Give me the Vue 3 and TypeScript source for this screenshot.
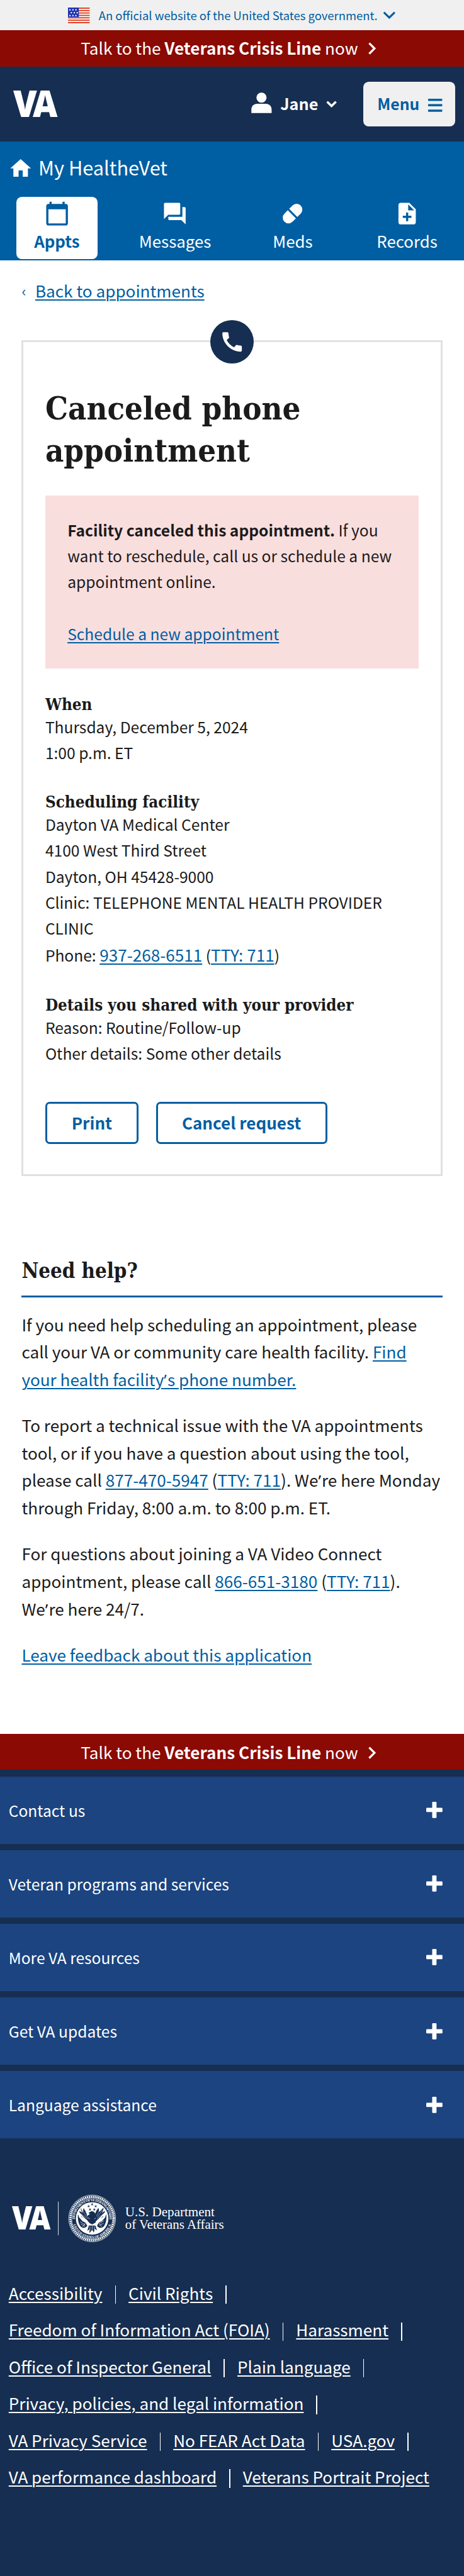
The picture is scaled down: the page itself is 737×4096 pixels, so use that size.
<script setup lang="ts">
interface NavItem {
  label: string
  icon: 'calendar' | 'forum' | 'pill' | 'note'
  active?: boolean
}

const navItems: NavItem[] = [
  { label: 'Appts', icon: 'calendar', active: true },
  { label: 'Messages', icon: 'forum' },
  { label: 'Meds', icon: 'pill' },
  { label: 'Records', icon: 'note' },
]

const iconPaths: Record<string, string> = {
  calendar:
    'M20 3h-1V1h-2v2H7V1H5v2H4c-1.1 0-2 .9-2 2v16c0 1.1.9 2 2 2h16c1.1 0 2-.9 2-2V5c0-1.1-.9-2-2-2zm0 18H4V8h16v13z',
  forum:
    'M21 6h-2v9H6v2c0 .55.45 1 1 1h11l4 4V7c0-.55-.45-1-1-1zm-4 6V3c0-.55-.45-1-1-1H3c-.55 0-1 .45-1 1v14l4-4h10c.55 0 1-.45 1-1z',
  note: 'M14 2H6c-1.1 0-1.99.9-1.99 2L4 20c0 1.1.89 2 1.99 2H18c1.1 0 2-.9 2-2V8l-6-6zm2 14h-3v3h-2v-3H8v-2h3v-3h2v3h3v2zm-3-7V3.5L18.5 9H13z',
}

const facilityLines: string[] = [
  'Dayton VA Medical Center',
  '4100 West Third Street',
  'Dayton, OH 45428-9000',
  'Clinic: TELEPHONE MENTAL HEALTH PROVIDER',
  'CLINIC',
]

const accordions: string[] = [
  'Contact us',
  'Veteran programs and services',
  'More VA resources',
  'Get VA updates',
  'Language assistance',
]

const footerRows: string[][] = [
  ['Accessibility', 'Civil Rights'],
  ['Freedom of Information Act (FOIA)', 'Harassment'],
  ['Office of Inspector General', 'Plain language'],
  ['Privacy, policies, and legal information'],
  ['VA Privacy Service', 'No FEAR Act Data', 'USA.gov'],
  ['VA performance dashboard', 'Veterans Portrait Project'],
]

const isLast = (row: number, col: number): boolean =>
  row === footerRows.length - 1 && col === footerRows[row].length - 1

const stripes: number[] = [0, 1, 2, 3, 4, 5, 6]
const flagStars: [number, number][] = [
  [3, 3], [8.5, 3], [14, 3],
  [5.5, 8.3], [11, 8.3], [16.5, 8.3],
  [3, 13.6], [8.5, 13.6], [14, 13.6],
]
const sealStars: [number, number][] = [
  [0, -26], [-6.5, -22.5], [6.5, -22.5], [-4, -16.5], [4, -16.5],
]
</script>

<template>
  <div class="page">
    <div class="gov">
      <svg class="flag" viewBox="0 0 40 29">
        <rect width="40" height="29" fill="#fff" />
        <rect v-for="i in stripes" :key="i" x="0" :y="i * 4.46" width="40" height="2.23" fill="#dc3f20" />
        <rect width="20" height="17.8" fill="#1e34b2" />
        <rect v-for="(s, i) in flagStars" :key="'s' + i" :x="s[0] - 0.6" :y="s[1]" width="2.4" height="2.4" fill="#fff" />
      </svg>
      <span class="gov-text">An official website of the United States government.</span>
      <svg class="gov-chev" viewBox="0 0 24 14"><path d="M2 2l10 9.6L22 2" fill="none" stroke="#005ea2" stroke-width="3.6" /></svg>
    </div>

    <div class="crisis crisis-top">
      <span class="crisis-text">Talk to the <b>Veterans Crisis Line</b> now</span>
      <svg class="crisis-chev" viewBox="0 0 28 28"><path d="M8.6 4.2l9.8 9.8-9.8 9.8" fill="none" stroke="#fff" stroke-width="3.8" /></svg>
    </div>

    <header class="header">
      <svg class="va" viewBox="0 0 80 49">
        <text transform="scale(.92 1)" x="0 39.3" y="49" font-size="68.6">VA</text>
      </svg>
      <div class="user">
        <svg class="person" viewBox="0 0 38 38">
          <circle cx="19" cy="9.6" r="9.3" fill="#fff" />
          <path d="M0.3 38V32C0.3 25 5 21 11 21H27C33 21 37.7 25 37.7 32V38z" fill="#fff" />
        </svg>
        <span class="user-name">Jane</span>
        <svg class="user-chev" viewBox="0 0 20 13"><path d="M1.8 2L10 10l8.2-8" fill="none" stroke="#fff" stroke-width="4" /></svg>
      </div>
      <button class="menu" type="button">
        <span class="menu-text">Menu</span>
        <svg class="bars" viewBox="0 0 26 24"><path d="M0 2h26M0 12h26M0 22h26" stroke="#005ea2" stroke-width="4" /></svg>
      </button>
    </header>

    <nav class="nav">
      <div class="brand">
        <svg class="home" viewBox="0 0 24 24"><path d="M10 20v-6h4v6h5v-8h3L12 3 2 12h3v8z" fill="#fff" /></svg>
        <span>My HealtheVet</span>
      </div>
      <div class="tabs">
        <a v-for="n in navItems" :key="n.label" class="tab" :class="{ active: n.active }">
          <svg class="tab-icon" viewBox="0 0 24 24">
            <g v-if="n.icon === 'pill'" transform="rotate(-45 12 12)" fill="currentColor">
              <path d="M11.1 6.7H6.7a5.3 5.3 0 0 0 0 10.6h4.4z" />
              <path d="M12.9 6.7h4.4a5.3 5.3 0 0 1 0 10.6h-4.4z" />
            </g>
            <path v-else :d="iconPaths[n.icon]" fill="currentColor" />
          </svg>
          <span class="tab-label">{{ n.label }}</span>
        </a>
      </div>
    </nav>

    <main class="main">
      <div class="back"><span class="back-arrow">‹</span><a class="link">Back to appointments</a></div>

      <section class="card">
        <div class="badge">
          <svg class="phone" viewBox="0 0 24 24">
            <path fill="#fff" d="M20.01 15.38c-1.23 0-2.42-.2-3.53-.56-.35-.12-.74-.03-1.01.24l-1.57 1.97c-2.83-1.35-5.48-3.9-6.89-6.83l1.95-1.66c.27-.28.35-.67.24-1.02-.37-1.11-.56-2.3-.56-3.53 0-.54-.45-.99-.99-.99H4.19C3.65 3 3 3.24 3 3.99 3 13.28 10.73 21 20.01 21c.71 0 .99-.63.99-1.18v-3.45c0-.54-.45-.99-.99-.99z" />
          </svg>
        </div>
        <h1>Canceled phone<br />appointment</h1>
        <div class="alert">
          <p><b>Facility canceled this appointment.</b> If you<br />want to reschedule, call us or schedule a new<br />appointment online.</p>
          <p class="alert-link"><a class="link">Schedule a new appointment</a></p>
        </div>
        <h2 class="when">When</h2>
        <p class="line">Thursday, December 5, 2024</p>
        <p class="line">1:00 p.m. ET</p>
        <h2>Scheduling facility</h2>
        <p v-for="l in facilityLines" :key="l" class="line">{{ l }}</p>
        <p class="line phone-line">Phone: <a class="link">937-268-6511</a> (<a class="link">TTY: 711</a>)</p>
        <h2 class="details">Details you shared with your provider</h2>
        <p class="line">Reason: Routine/Follow-up</p>
        <p class="line">Other details: Some other details</p>
        <div class="actions">
          <button type="button" class="btn print">Print</button>
          <button type="button" class="btn cancel">Cancel request</button>
        </div>
      </section>

      <section class="help">
        <h2 class="help-title">Need help?</h2>
        <p>If you need help scheduling an appointment, please<br />call your VA or community care health facility. <a class="link">Find<br />your health facility<span class="apos">’</span>s phone number.</a></p>
        <p>To report a technical issue with the VA appointments<br />tool, or if you have a question about using the tool,<br />please call <a class="link">877-470-5947</a> (<a class="link">TTY: 711</a>). We<span class="apos">’</span>re here Monday<br />through Friday, 8:00 a.m. to 8:00 p.m. ET.</p>
        <p>For questions about joining a VA Video Connect<br />appointment, please call <a class="link">866-651-3180</a> (<a class="link">TTY: 711</a>).<br />We<span class="apos">’</span>re here 24/7.</p>
        <p><a class="link">Leave feedback about this application</a></p>
      </section>
    </main>

    <div class="crisis crisis-bottom">
      <span class="crisis-text">Talk to the <b>Veterans Crisis Line</b> now</span>
      <svg class="crisis-chev" viewBox="0 0 28 28"><path d="M8.6 4.2l9.8 9.8-9.8 9.8" fill="none" stroke="#fff" stroke-width="3.8" /></svg>
    </div>

    <footer class="footer">
      <div class="accordions">
        <div v-for="a in accordions" :key="a" class="accordion">
          <span>{{ a }}</span>
          <svg class="plus" viewBox="0 0 30 30">
            <rect x="0" y="11" width="30" height="8" rx="1.5" fill="#fff" />
            <rect x="11" y="0" width="8" height="30" rx="1.5" fill="#fff" />
          </svg>
        </div>
      </div>

      <svg class="logo" viewBox="0 0 430 96">
        <text class="va-text" transform="translate(22 67) scale(.9 1)" x="0 35.4" y="0" font-size="60.2">VA</text>
        <path d="M107.5 16v62" stroke="#fff" stroke-width="1" />
        <g transform="translate(170 47)">
          <circle r="43.2" fill="none" stroke="#fff" stroke-width="0.9" />
          <circle r="40" fill="none" stroke="#fff" stroke-width="3.8" stroke-dasharray="2.3 1.2" />
          <circle r="37.7" fill="none" stroke="#fff" stroke-width="0.6" />
          <path id="arc-top" d="M-31.9 2.6A32 32 0 1 1 31.9 2.6" fill="none" />
          <path id="arc-bottom" d="M-35.3 10.5A36.8 36.8 0 0 0 35.3 10.5" fill="none" />
          <text class="seal-text" font-size="6.6"><textPath href="#arc-top" textLength="104" startOffset="1">DEPARTMENT OF VETERANS AFFAIRS</textPath></text>
          <text class="seal-text" font-size="6.6"><textPath href="#arc-bottom" textLength="92" startOffset="1">UNITED STATES OF AMERICA</textPath></text>
          <circle r="30" fill="#fff" />
          <g fill="#162e51">
            <path v-for="(s, i) in sealStars" :key="i" :transform="`translate(${s[0]} ${s[1]})`" d="M0-2.6l.7 1.8h1.9l-1.5 1.2.6 1.9L0 1.2l-1.7 1.1.6-1.9-1.5-1.2h1.9z" />
            <path d="M-21-20c0 5 2 8 4 10l-7-4c1 5 4 8 7 10l-4 0c3 3 7 5 11 6l4 6 6 3 6-3 4-6c4-1 8-3 11-6h-4c3-2 6-5 7-10l-7 4c2-2 4-5 4-10l-8 8-1-7c-3 2-5 6-6 10-2-3-5-5-8-4l-5 3 3 2c-2 1-4 2-5 4-1-6-3-11-7-15l-1 8z" />
            <path d="M-26-8c-1 8 0 16 4 22 4 5 9 4 13 0l-3-6-6-3-6-7z" />
            <path d="M26-8c1 8 0 16-4 22-4 5-9 4-13 0l3-6 6-3 6-7z" />
            <path d="M-6 13l-3 10 4-3 0 7 5-6 3 5 2-7 4 3-3-9z" />
          </g>
          <g stroke="#fff" fill="none" stroke-width="0.8">
            <path d="M-19-16l9 13M-21-9l12 9M-14-17l6 13M19-16l-9 13M21-9l-12 9M14-17l-6 13" stroke-width="0.55" />
            <path d="M-24-10l18 19M24-10L7 7" stroke-width="2.4" />
            <path d="M-22 6l9 6M-21 10l8 5M-15 3l5 4M22 4l-8 5M21 9l-8 4M23-1l-8 5M-18 16l6-8M18 16l-6-8" />
            <path d="M-4 15v8M0 14v7M4 14v7" />
            <path d="M-9-2l5 3M4 1l3-2" />
          </g>
        </g>
        <text class="dept" x="231" y="42.7" textLength="165" lengthAdjust="spacingAndGlyphs">U.S. Department</text>
        <text class="dept" x="231" y="66.7" textLength="182" lengthAdjust="spacingAndGlyphs">of Veterans Affairs</text>
      </svg>

      <div class="links">
        <div v-for="(row, r) in footerRows" :key="r" class="links-row">
          <template v-for="(l, c) in row" :key="l">
            <a>{{ l }}</a><span v-if="!isLast(r, c)" class="sep"></span>
          </template>
        </div>
      </div>
    </footer>
  </div>
</template>

<style>
/* 1rem equals 100 design units */
html {
  font-size: 86.1px;
}
</style>

<style scoped>
.page {
  width: 8.56rem;
  height: 47.57rem;
  overflow: hidden;
  background: #fff;
  color: #1b1b1b;
  font-family: 'Noto Sans CJK SC', 'Noto Sans', sans-serif;
  font-size: 0.3033rem;
  white-space: nowrap;
}
p,
h1,
h2 {
  margin: 0;
}
svg {
  display: block;
  flex: none;
  overflow: visible;
}
.link {
  color: #005ea2;
  text-decoration: underline;
  text-decoration-thickness: 0.02rem;
  text-underline-offset: 0.035rem;
}
.apos {
  font-family: 'Noto Sans', sans-serif;
  letter-spacing: 0.012rem;
  line-height: 0;
}

.gov {
  height: 0.56rem;
  background: #f0f0f0;
  display: flex;
  align-items: center;
  padding-left: 1.26rem;
  box-sizing: border-box;
  color: #005ea2;
  font-size: 0.2145rem;
  line-height: 0.4rem;
}
.flag {
  width: 0.4rem;
  height: 0.29rem;
  margin-right: 0.16rem;
}
.gov-text {
  width: 5.15rem;
  margin-right: 0.09rem;
}
.gov-chev {
  width: 0.24rem;
  height: 0.14rem;
}

.crisis {
  background: #8b0a03;
  color: #fff;
  display: flex;
  align-items: center;
  padding-left: 1.49rem;
  box-sizing: border-box;
  line-height: 0.5rem;
}
.crisis-top {
  height: 0.67rem;
}
.crisis-top .crisis-text {
  margin-top: -0.02rem;
}
.crisis-bottom {
  height: 0.664rem;
}
.crisis-bottom .crisis-text {
  margin-top: 0.015rem;
}
.crisis-bottom .crisis-chev {
  margin-top: 0.03rem;
}
.crisis-text {
  width: 5.11rem;
}
.crisis-chev {
  width: 0.28rem;
  height: 0.28rem;
  margin-left: 0.125rem;
}

.header {
  height: 1.38rem;
  background: #162e51;
  display: flex;
  align-items: center;
  padding: 0 0.16rem 0 0.24rem;
  color: #fff;
}
.va {
  width: 0.8rem;
  height: 0.49rem;
}
.va text,
.va-text {
  font-family: 'Open Sans', sans-serif;
  font-weight: 800;
  fill: #fff;
}
.user {
  display: flex;
  align-items: center;
  margin-left: auto;
  font-weight: 700;
  font-size: 0.2935rem;
  line-height: 0.4rem;
}
.person {
  width: 0.38rem;
  height: 0.38rem;
  margin: -0.04rem 0.16rem 0 0;
}
.user-name {
  width: 0.7rem;
  margin-top: -0.03rem;
}
.user-chev {
  width: 0.2rem;
  height: 0.13rem;
  margin: 0 0.48rem 0 0.15rem;
}
.menu {
  width: 1.7rem;
  height: 0.82rem;
  border: 0;
  border-radius: 0.1rem;
  background: #f0f0f0;
  color: #005ea2;
  display: flex;
  align-items: center;
  padding: 0 0 0 0.26rem;
  font: 700 0.287rem/0.4rem 'Noto Sans CJK SC', sans-serif;
}
.menu-text {
  width: 0.78rem;
  margin: -0.02rem 0.16rem 0 0;
  text-align: left;
}
.bars {
  width: 0.26rem;
  height: 0.24rem;
  margin-top: 0.04rem;
}

.nav {
  height: 2.2rem;
  background: #005ea2;
  color: #fff;
}
.brand {
  height: 1.02rem;
  box-sizing: border-box;
  padding: 0 0 0.076rem 0.15rem;
  display: flex;
  align-items: center;
  font-size: 0.357rem;
  line-height: 0.5rem;
}
.home {
  width: 0.46rem;
  height: 0.46rem;
  margin: 0.046rem 0.1rem 0 0;
}
.tabs {
  display: grid;
  grid-template-columns: 1.5rem 2.06rem 1.48rem 1.94rem;
  column-gap: 0.4rem;
  padding-left: 0.3rem;
}
.tab {
  height: 1.15rem;
  box-sizing: border-box;
  padding-top: 0.08rem;
  border-radius: 0.1rem;
  display: flex;
  flex-direction: column;
  align-items: center;
  font-size: 0.3rem;
  line-height: 0.4rem;
}
.tab.active {
  background: #fff;
  color: #005ea2;
  font-weight: 700;
}
.tab-icon {
  width: 0.48rem;
  height: 0.48rem;
  margin-bottom: 0.057rem;
}

.main {
  height: 27.21rem;
  padding: 0.318rem 0.4rem 0;
  box-sizing: border-box;
}
.back {
  display: flex;
  height: 0.5rem;
  line-height: 0.5rem;
  margin-bottom: 0.652rem;
  color: #005ea2;
}
.back-arrow {
  width: 0.25rem;
  font-size: 0.27rem;
}

.card {
  position: relative;
  height: 15.445rem;
  box-sizing: border-box;
  border: 0.04rem solid #dfe1e2;
  padding: 0.837rem 0.4rem 0;
}
.badge {
  position: absolute;
  top: -0.4rem;
  left: 50%;
  margin-left: -0.4rem;
  width: 0.8rem;
  height: 0.8rem;
  border-radius: 50%;
  background: #162e51;
  display: flex;
  align-items: center;
  justify-content: center;
}
.phone {
  width: 0.48rem;
  height: 0.48rem;
}
h1,
h2 {
  font-family: 'DejaVu Serif Condensed', 'DejaVu Serif', serif;
  font-stretch: condensed;
  font-weight: 700;
}
h1 {
  font-size: 0.5859rem;
  line-height: 0.78rem;
}
.alert {
  margin-top: 0.443rem;
  height: 3.195rem;
  box-sizing: border-box;
  padding: 0.389rem 0.41rem 0;
  background: #f9dede;
  font-size: 0.2857rem;
  line-height: 0.48rem;
}
.alert-link {
  margin-top: 0.48rem;
}
.card h2 {
  font-size: 0.2997rem;
  line-height: 0.34rem;
  margin-top: 0.5rem;
}
.card h2.when {
  margin-top: 0.494rem;
}
.card h2.details {
  margin-top: 0.51rem;
}
.card .line {
  height: 0.48rem;
  font-size: 0.2857rem;
  line-height: 0.48rem;
}
.card .phone-line {
  margin-top: 0.02rem;
}
.phone-line .link {
  font-size: 0.3033rem;
}
.actions {
  margin-top: 0.659rem;
  display: flex;
  gap: 0.32rem;
}
.btn {
  height: 0.775rem;
  box-sizing: border-box;
  border: 0.04rem solid #005ea2;
  border-radius: 0.08rem;
  background: #fff;
  color: #005ea2;
  padding: 0 0 0.006rem;
  font: 700 0.3027rem/0.5rem 'Noto Sans CJK SC', sans-serif;
}
.print {
  width: 1.72rem;
}
.cancel {
  width: 3.16rem;
}

.help-title {
  margin-top: 1.502rem;
  font-size: 0.38rem;
  line-height: 0.48rem;
  padding-bottom: 0.221rem;
  border-bottom: 0.04rem solid #005ea2;
  margin-bottom: 0.249rem;
}
.help p {
  line-height: 0.508rem;
  margin-bottom: 0.34rem;
}

.footer {
  background: #162e51;
  color: #fff;
  height: 14.9rem;
  overflow: hidden;
}
.accordions {
  margin-top: 0.126rem;
  display: flex;
  flex-direction: column;
  gap: 0.12rem;
}
.accordion {
  height: 1.24rem;
  background: #1b4480;
  display: flex;
  align-items: center;
  justify-content: space-between;
  padding: 0 0.4rem 0 0.16rem;
  font-size: 0.2857rem;
  line-height: 0.4rem;
}
.plus {
  width: 0.3rem;
  height: 0.3rem;
}
.logo {
  width: 4.3rem;
  height: 0.96rem;
  margin-top: 1.01rem;
}
.seal-text {
  font-family: 'Liberation Serif', serif;
  font-weight: 700;
  fill: #fff;
}
.dept {
  font-family: 'Liberation Serif', serif;
  font-size: 24.5px;
  fill: #fff;
}
.links {
  margin-top: 0.55rem;
  padding-left: 0.16rem;
}
.links-row {
  height: 0.679rem;
  line-height: 0.679rem;
}
.links a {
  text-decoration: underline;
  text-decoration-thickness: 0.02rem;
  text-underline-offset: 0.035rem;
}
.sep {
  display: inline-block;
  width: 0.018rem;
  height: 0.34rem;
  margin: 0 0.233rem;
  background: #fff;
  vertical-align: -0.075rem;
}
</style>
